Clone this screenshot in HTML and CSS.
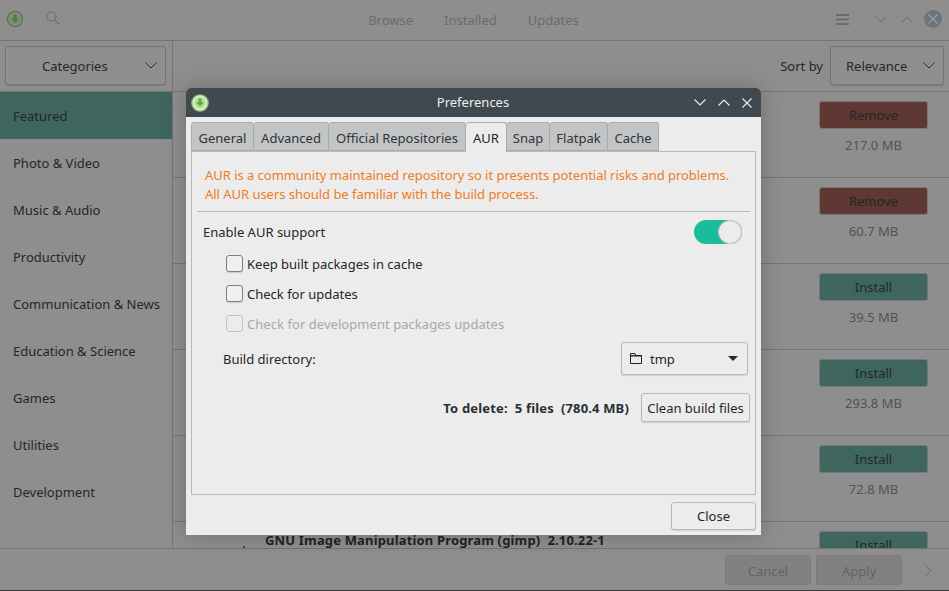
FILE: index.html
```html
<!DOCTYPE html>
<html lang="en">
<head>
    <meta charset="UTF-8">
    <title>Preferences</title>
    <link rel="stylesheet" href="styles.css">
</head>
<body>
    <div class="app">
        <header class="topbar">
            <div class="topbar-left">
                <svg class="app-icon" width="18" height="18" viewBox="0 0 18 18">
                    <circle cx="9" cy="9" r="7.5" fill="#8a8f86" stroke="#55794c" stroke-width="1.4"/>
                    <circle cx="9" cy="9" r="5.2" fill="#7d8a78"/>
                    <path d="M7.5 4.5h3v4h2.3L9 12.8 5.2 8.5h2.3z" fill="#46803a"/>
                </svg>
                <svg class="search-icon" width="14" height="14" viewBox="0 0 14 14">
                    <circle cx="5.5" cy="5.5" r="4.5" fill="none" stroke="#6c6c6c" stroke-width="1.1"/>
                    <path d="M9 9l4.5 4.5" stroke="#6c6c6c" stroke-width="1.2"/>
                </svg>
            </div>
            <nav class="topnav">
                <span>Browse</span>
                <span>Installed</span>
                <span>Updates</span>
            </nav>
            <div class="topbar-right">
                <svg width="13" height="11" viewBox="0 0 13 11">
                    <path d="M0 1h13M0 5.5h13M0 10h13" stroke="#636363" stroke-width="1.6"/>
                </svg>
                <svg class="win-chevron" width="12" height="7" viewBox="0 0 12 7">
                    <path d="M.5.5L6 6 11.500.5" fill="none" stroke="#6c6c6c"/>
                </svg>
                <svg class="win-chevron" width="12" height="7" viewBox="0 0 12 7">
                    <path d="M.5 6.500L6 1l5.500 5.500" fill="none" stroke="#6c6c6c"/>
                </svg>
                <svg class="win-close" width="18" height="18" viewBox="0 0 18 18">
                    <circle cx="9" cy="9" r="9" fill="#6b747b"/>
                    <path d="M4.500 4.500l9 9M13.500 4.500l-9 9" stroke="#9a9fa3" stroke-width="1.1"/>
                </svg>
            </div>
        </header>

        <div class="main">
            <aside class="sidebar">
                <div class="sidebar-head">
                    <div class="select categories">
                        <span>Categories</span>
                        <svg class="select-arrow" width="12" height="7" viewBox="0 0 12 7">
                            <path d="M.5.500L6 6l5.500-5.500" fill="none" stroke="#2a2a2a"/>
                        </svg>
                    </div>
                </div>
                <ul class="category-list">
                    <li class="active">Featured</li>
                    <li>Photo &amp; Video</li>
                    <li>Music &amp; Audio</li>
                    <li>Productivity</li>
                    <li>Communication &amp; News</li>
                    <li>Education &amp; Science</li>
                    <li>Games</li>
                    <li>Utilities</li>
                    <li>Development</li>
                </ul>
            </aside>

            <section class="content">
                <div class="sortbar">
                    <span class="sort-label">Sort by</span>
                    <div class="select sort">
                        <span>Relevance</span>
                        <svg class="select-arrow" width="12" height="7" viewBox="0 0 12 7">
                            <path d="M.5.500L6 6l5.500-5.500" fill="none" stroke="#2a2a2a"/>
                        </svg>
                    </div>
                </div>
                <div class="packages">
                    <div class="package">
                        <div class="actions"><div class="pkg-btn remove">Remove</div><span class="size">217.0 MB</span></div>
                    </div>
                    <div class="package">
                        <div class="actions"><div class="pkg-btn remove">Remove</div><span class="size">60.7 MB</span></div>
                    </div>
                    <div class="package">
                        <div class="actions"><div class="pkg-btn install">Install</div><span class="size">39.5 MB</span></div>
                    </div>
                    <div class="package">
                        <div class="actions"><div class="pkg-btn install">Install</div><span class="size">293.8 MB</span></div>
                    </div>
                    <div class="package">
                        <div class="actions"><div class="pkg-btn install">Install</div><span class="size">72.8 MB</span></div>
                    </div>
                    <div class="package">
                        <span class="pkg-icon-tip"></span>
                        <div class="pkg-name">GNU Image Manipulation Program (gimp)&nbsp; 2.10.22-1</div>
                        <div class="actions"><div class="pkg-btn install">Install</div></div>
                    </div>
                </div>
            </section>
        </div>

        <footer class="bottombar">
            <div class="bottom-btn">Cancel</div>
            <div class="bottom-btn">Apply</div>
            <svg class="bottom-next" width="8" height="13" viewBox="0 0 8 13">
                <path d="M1 .5l6 6-6 6" fill="none" stroke="#666"/>
            </svg>
        </footer>
    </div>

    <div class="dialog">
        <div class="dialog-title">
            <svg class="dialog-icon" width="18" height="18" viewBox="0 0 18 18">
                <circle cx="9" cy="9" r="8.200" fill="#dfe8da" stroke="#8cc46f" stroke-width="1.300"/>
                <circle cx="9" cy="8.800" r="5.600" fill="#b9e09a"/>
                <path d="M7.500 4.300h3v4h2.300L9 12.500 5.200 8.300h2.300z" fill="#55b52a"/>
            </svg>
            <span class="dialog-name">Preferences</span>
            <div class="dialog-controls">
                <svg width="12" height="7" viewBox="0 0 12 7">
                    <path d="M.5.500L6 6l5.500-5.500" fill="none" stroke="#eee" stroke-width="1.100"/>
                </svg>
                <svg width="12" height="7" viewBox="0 0 12 7">
                    <path d="M.5 6.500L6 1l5.500 5.500" fill="none" stroke="#eee" stroke-width="1.100"/>
                </svg>
                <svg width="10" height="10" viewBox="0 0 10 10">
                    <path d="M.5.500l9 9M9.500.500l-9 9" stroke="#eee" stroke-width="1.100"/>
                </svg>
            </div>
        </div>
        <div class="dialog-body">
            <div class="tabs">
                <span class="tab">General</span>
                <span class="tab">Advanced</span>
                <span class="tab">Official Repositories</span>
                <span class="tab current">AUR</span>
                <span class="tab">Snap</span>
                <span class="tab">Flatpak</span>
                <span class="tab">Cache</span>
            </div>
            <div class="panel">
                <p class="warning">AUR is a community maintained repository so it presents potential risks and problems.<br>All AUR users should be familiar with the build process.</p>
                <div class="separator"></div>
                <div class="enable-row">
                    <span>Enable AUR support</span>
                    <div class="toggle"><div class="toggle-knob"></div></div>
                </div>
                <label class="check-row"><span class="checkbox"></span>Keep built packages in cache</label>
                <label class="check-row"><span class="checkbox"></span>Check for updates</label>
                <label class="check-row disabled"><span class="checkbox"></span>Check for development packages updates</label>
                <div class="build-row">
                    <span>Build directory:</span>
                    <div class="folder-select">
                        <svg width="12" height="11" viewBox="0 0 12 11">
                            <path d="M.5 10.500V.5h4.500l1 2h5.500v8z" fill="none" stroke="#222"/>
                            <path d="M.5 2.800h11" stroke="#222" stroke-width="1.400"/>
                        </svg>
                        <span class="folder-name">tmp</span>
                        <span class="folder-caret"></span>
                    </div>
                </div>
                <div class="clean-row">
                    <b class="to-delete">To delete:&nbsp; 5 files&nbsp; (780.4 MB)</b>
                    <div class="btn clean">Clean build files</div>
                </div>
            </div>
            <div class="dialog-footer">
                <div class="btn close">Close</div>
            </div>
        </div>
    </div>
</body>
</html>
```

FILE: styles.css
```css
* {
    box-sizing: border-box;
}
html, body {
    margin: 0;
    height: 100%;
    overflow: hidden;
}
body {
    font-family: "Noto Sans", sans-serif;
    font-size: 13px;
    color: #262626;
    background-color: #8e8e8e;
}
.app {
    width: 949px;
    height: 591px;
    display: flex;
    flex-direction: column;
    background-color: #8e8e8e;
    border-bottom: 1px solid #3c3c3c;
}

/* top bar */
.topbar {
    height: 41px;
    flex: none;
    display: grid;
    grid-template-columns: 1fr auto 1fr;
    align-items: center;
    border-bottom: 1px solid #747474;
}
.topbar-left {
    display: flex;
    align-items: center;
    padding: 0 0 2px 6px;
}
.search-icon {
    margin-left: 22px;
    margin-top: -2px;
}
.topnav {
    display: flex;
    gap: 31px;
    padding-right: 2px;
    color: #6b6b6b;
}
.topbar-right {
    display: flex;
    align-items: center;
    justify-content: flex-end;
    padding: 0 7px 2px 0;
}
.win-chevron {
    margin-left: 14px;
}
.topbar-right svg:first-child {
    margin-right: 12px;
}
.win-close {
    margin-left: 11px;
}

/* sidebar + list */
.main {
    flex: 1;
    display: flex;
    min-height: 0;
}
.sidebar {
    width: 173px;
    flex: none;
    border-right: 1px solid #747474;
}
.sidebar-head {
    height: 51px;
    padding: 5px 6px 0 5px;
    border-bottom: 1px solid #747474;
}
.select {
    position: relative;
    height: 39px;
    display: flex;
    align-items: center;
    border: 1px solid #747474;
    border-radius: 3px;
    background-color: #8f8f8f;
    box-shadow: 0 1px 1px rgba(0,0,0,0.12);
}
.select-arrow {
    position: absolute;
    right: 8px;
    top: 15px;
}
.categories span {
    margin-left: 36px;
}
.category-list {
    list-style: none;
    margin: 0;
    padding: 0;
}
.category-list li {
    height: 47px;
    line-height: 49px;
    padding-left: 13px;
}
.category-list .active {
    background-color: #3e665e;
}
.content {
    flex: 1;
    min-width: 0;
    display: flex;
    flex-direction: column;
}
.sortbar {
    height: 51px;
    flex: none;
    display: flex;
    align-items: flex-start;
    padding: 5px 5px 0 0;
    justify-content: flex-end;
    border-bottom: 1px solid #747474;
}
.sort-label {
    line-height: 41px;
}
.sort {
    width: 114px;
    margin-left: 7px;
}
.sort span {
    margin-left: 15px;
}
.packages {
    flex: 1;
    overflow: hidden;
}
.package {
    height: 86px;
    display: flex;
    justify-content: flex-end;
    border-bottom: 1px solid #747474;
    position: relative;
}
.pkg-name {
    position: absolute;
    left: 92px;
    top: 9px;
    font-weight: bold;
    letter-spacing: 0.16px;
    white-space: nowrap;
    color: #222;
}
.pkg-icon-tip {
    position: absolute;
    left: 70px;
    top: 24px;
    width: 2px;
    height: 2px;
    background-color: #4a4a4a;
}
.actions {
    width: 109px;
    margin-right: 21px;
    padding-top: 9px;
    display: flex;
    flex-direction: column;
    align-items: center;
}
.pkg-btn {
    width: 109px;
    height: 28px;
    line-height: 27px;
    text-align: center;
    border-radius: 3px;
    border: 1px solid #777;
}
.remove {
    background-color: #5f3733;
}
.install {
    background-color: #3e665e;
}
.size {
    margin-top: 7px;
    color: #535353;
}
.bottombar {
    height: 42px;
    flex: none;
    display: flex;
    align-items: flex-start;
    justify-content: flex-end;
    padding-top: 6px;
    gap: 5px;
    border-top: 1px solid #747474;
}
.bottom-btn {
    width: 86px;
    height: 30px;
    line-height: 31px;
    text-align: center;
    color: #636363;
    background-color: #818181;
    border-radius: 3px;
    border: 1px solid #7b7b7b;
}
.bottom-next {
    margin: 9px 17px 0 17px;
}

/* preferences dialog */
.dialog {
    position: absolute;
    left: 186px;
    top: 88px;
    width: 575px;
    height: 447px;
    background-color: #ececec;
    border-radius: 5px 5px 0 0;
    box-shadow: 0 0 22px rgba(0,0,0,0.22);
    display: flex;
    flex-direction: column;
}
.dialog-title {
    height: 29px;
    flex: none;
    background-color: #404950;
    color: #eeeeee;
    border-radius: 5px 5px 0 0;
    display: grid;
    grid-template-columns: 1fr auto 1fr;
    align-items: center;
    padding: 0 9px 0 5px;
}
.dialog-icon {
    display: block;
}
.dialog-name {
    grid-column: 2;
    padding: 0 0 2px 3px;
}
.dialog-controls {
    display: flex;
    align-items: center;
    justify-content: flex-end;
    gap: 12px;
}
.dialog-body {
    flex: 1;
    display: flex;
    flex-direction: column;
    padding: 5px 5px 5px 5px;
}
.tabs {
    display: flex;
    height: 29px;
    flex: none;
    position: relative;
    z-index: 1;
}
.tab {
    height: 29px;
    line-height: 30px;
    text-align: center;
    white-space: nowrap;
    background-color: #c3c4c5;
    border: 1px solid #ababab;
    border-left-width: 0;
    border-radius: 3px 3px 0 0;
    color: #2f3439;
}
.tab:nth-child(1) {
    width: 63px;
    border-left-width: 1px;
}
.tab:nth-child(2) {
    width: 75px;
}
.tab:nth-child(3) {
    width: 137px;
}
.tab:nth-child(4) {
    width: 41px;
}
.tab:nth-child(5) {
    width: 43px;
}
.tab:nth-child(6) {
    width: 58px;
}
.tab:nth-child(7) {
    width: 51px;
}
.tab.current {
    height: 30px;
    background-color: #ececec;
    border-bottom: none;
    color: #262626;
}
.panel {
    height: 344px;
    flex: none;
    border: 1px solid #b9b9b9;
    padding: 14px 5px 0 5px;
}
.warning {
    margin: 0 0 0 8px;
    line-height: 19px;
    letter-spacing: -0.035px;
    color: #ee7d26;
}
.separator {
    height: 1px;
    background-color: #b9b9b9;
    margin-top: 7px;
}
.enable-row {
    display: flex;
    align-items: center;
    justify-content: space-between;
    height: 24px;
    margin-top: 8px;
    padding: 0 8px 0 6px;
}
.toggle {
    width: 48px;
    height: 24px;
    border-radius: 12px;
    background-color: #1abc9c;
    display: flex;
    justify-content: flex-end;
}
.toggle-knob {
    width: 24px;
    height: 24px;
    border-radius: 50%;
    background-color: #ececec;
    border: 1px solid #c9c9c9;
}
.check-row {
    display: flex;
    align-items: center;
    height: 17px;
    margin: 11px 0 0 29px;
    gap: 4px;
}
.check-row + .check-row {
    margin-top: 13px;
}
.checkbox {
    width: 17px;
    height: 17px;
    border: 1px solid #7f7f7f;
    border-radius: 3px;
    background-color: #f0f0f0;
    box-shadow: 0 1px 1px rgba(0,0,0,0.15);
}
.disabled {
    color: #a9a9a9;
    letter-spacing: 0.05px;
}
.disabled .checkbox {
    border-color: #c4c4c4;
    background-color: #ececec;
    box-shadow: none;
}
.build-row {
    display: flex;
    align-items: center;
    justify-content: space-between;
    margin: 10px 2px 0 26px;
}
.folder-select {
    width: 127px;
    height: 33px;
    display: flex;
    align-items: center;
    padding: 0 9px 0 8px;
    border: 1px solid #b8b8b8;
    border-radius: 3px;
    background-color: #ececec;
    box-shadow: 0 1px 1px rgba(0,0,0,0.12);
}
.folder-name {
    margin-left: 8px;
    flex: 1;
}
.folder-caret {
    width: 0;
    height: 0;
    border-left: 5px solid transparent;
    border-right: 5px solid transparent;
    border-top: 5px solid #2a2a2a;
}
.clean-row {
    display: flex;
    align-items: center;
    justify-content: flex-end;
    margin: 18px 0 0 0;
}
.to-delete {
    margin-right: 12px;
    letter-spacing: 0.16px;
    color: #2b2f33;
}
.btn {
    text-align: center;
    border: 1px solid #b8b8b8;
    border-radius: 3px;
    background-color: #ececec;
    box-shadow: 0 1px 1px rgba(0,0,0,0.12);
}
.clean {
    width: 109px;
    height: 29px;
    line-height: 28px;
}
.dialog-footer {
    display: flex;
    justify-content: flex-end;
    margin-top: 7px;
}
.close {
    width: 85px;
    height: 28px;
    line-height: 27px;
}
```
